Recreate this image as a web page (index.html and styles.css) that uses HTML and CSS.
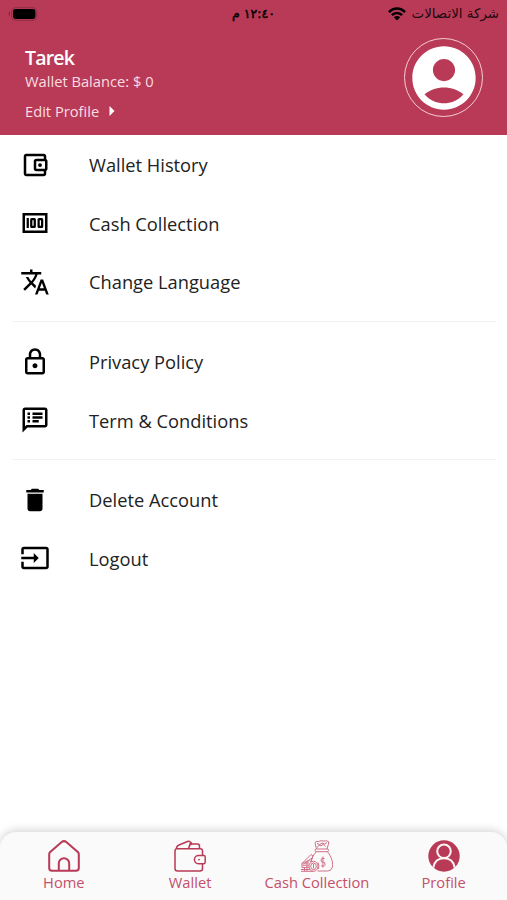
FILE: index.html
```html
<!DOCTYPE html>
<html lang="en">
<head>
<meta charset="utf-8">
<title>Profile</title>
<link rel="stylesheet" href="styles.css">
</head>
<body>
<div class="screen">
  <header class="header">
    <div class="status">
      <svg class="battery" viewBox="0 0 30 14"><rect x="3.6" y=".6" width="25" height="12.8" rx="3.6" fill="none" stroke="#8f3047" stroke-width="1"/><rect x="5" y="2" width="22.4" height="10" rx="2.4"/><path d="M1.8 4.6v4.6C.2 8.600.2 5.200 1.800 4.600z" fill="#7c2a3d"/></svg>
      <span class="clock" dir="rtl">١٢:٤٠ م</span>
      <div class="carrier">
        <svg class="wifi" viewBox="0 0 18 14"><g fill="none" stroke="#000" stroke-width="2.500"><path d="M.9 5.100C5.500.300 12.500.300 17.100 5.100"/><path d="M3.900 8.200C6.800 5.200 11.200 5.200 14.100 8.200"/></g><path d="M9 13.600L5.800 10.300C7.600 8.600 10.400 8.600 12.200 10.300z"/></svg>
        <span dir="rtl">شركة الاتصالات</span>
      </div>
    </div>
    <div class="user">
      <div class="info">
        <h1>Tarek</h1>
        <p class="balance">Wallet Balance: $ 0</p>
        <a class="edit">Edit Profile <svg viewBox="0 0 6 10"><path d="M.5 0L5.500 5L.5 10z" fill="#fff"/></svg></a>
      </div>
      <div class="avatar">
        <svg viewBox="0 0 24 24"><path fill="#fff" fill-rule="evenodd" d="M12 2C6.480 2 2 6.480 2 12s4.480 10 10 10 10-4.480 10-10S17.520 2 12 2zM12 6c1.930 0 3.500 1.570 3.500 3.500S13.930 13 12 13s-3.500-1.570-3.500-3.500S10.070 6 12 6zM12 20c-2.030 0-4.430-.820-6.140-2.880C7.550 15.800 9.680 15 12 15s4.450.800 6.140 2.120C16.430 19.180 14.030 20 12 20z"/></svg>
      </div>
    </div>
  </header>

  <main class="menu">
    <section>
      <a class="row"><svg viewBox="0 0 24 24"><path d="M21 7.280V5c0-1.100-.9-2-2-2H5c-1.110 0-2 .9-2 2v14c0 1.100.890 2 2 2h14c1.100 0 2-.9 2-2v-2.280c.590-.350 1-.980 1-1.720V9c0-.740-.410-1.370-1-1.720zM20 9v6h-7V9h7zM5 19V5h14v2h-6c-1.100 0-2 .9-2 2v6c0 1.100.9 2 2 2h6v2H5z"/><circle cx="16" cy="12" r="1.500"/></svg><span>Wallet History</span></a>
      <a class="row"><svg viewBox="0 0 24 24"><g fill="none" stroke="#000"><rect x="3" y="5" width="18" height="14" stroke-width="2"/><path d="M6.200 8v8" stroke-width="1.800"/><rect x="9" y="8.900" width="2.800" height="6.200" rx=".3" stroke-width="1.800"/><rect x="14.900" y="8.900" width="2.800" height="6.200" rx=".3" stroke-width="1.800"/></g></svg><span>Cash Collection</span></a>
      <a class="row"><svg viewBox="0 0 24 24"><path d="M12.870 15.070l-2.540-2.510.030-.030c1.740-1.940 2.980-4.170 3.710-6.530H17V4h-7V2H8v2H1v1.990h11.170C11.500 7.920 10.440 9.750 9 11.350 8.070 10.320 7.300 9.190 6.690 8h-2c.730 1.630 1.730 3.170 2.980 4.560l-5.090 5.020L4 19l5-5 3.110 3.110.760-2.040zM18.500 10h-2L12 22h2l1.120-3h4.750L21 22h2l-4.500-12zm-2.620 7l1.620-4.330L19.120 17h-3.240z"/></svg><span>Change Language</span></a>
    </section>
    <section>
      <a class="row"><svg viewBox="0 0 24 24"><path d="M18 8h-1V6c0-2.760-2.240-5-5-5S7 3.240 7 6v2H6c-1.100 0-2 .9-2 2v10c0 1.100.9 2 2 2h12c1.100 0 2-.9 2-2V10c0-1.100-.9-2-2-2zM9 6c0-1.660 1.340-3 3-3s3 1.340 3 3v2H9V6zm9 14H6V10h12v10zm-6-3c1.100 0 2-.9 2-2s-.9-2-2-2-2 .9-2 2 .9 2 2 2z"/></svg><span>Privacy Policy</span></a>
      <a class="row"><svg viewBox="0 0 24 24"><path d="M20 2H4c-1.100 0-2 .9-2 2v18l4-4h14c1.100 0 2-.9 2-2V4c0-1.100-.9-2-2-2zm0 14H5.170L4 17.170V4h16v12z"/><path d="M6 12h2v2H6zM6 9h2v2H6zM6 6h2v2H6zM10 12h5v2h-5zM10 9h8v2h-8zM10 6h8v2h-8z"/></svg><span>Term &amp; Conditions</span></a>
    </section>
    <section>
      <a class="row"><svg viewBox="0 0 24 24"><path d="M6 19c0 1.100.9 2 2 2h8c1.100 0 2-.9 2-2V7H6v12zM19 4h-3.500l-1-1h-5l-1 1H5v2h14V4z"/></svg><span>Delete Account</span></a>
      <a class="row"><svg viewBox="0 0 24 24"><path d="M21 3.010H3c-1.100 0-2 .9-2 2V9h2V4.990h18v14.030H3V15H1v4.010c0 1.100.9 1.980 2 1.980h18c1.100 0 2-.880 2-1.980v-14c0-1.110-.9-2-2-2zM11 16l4-4-4-4v3H1v2h10v3z"/></svg><span>Logout</span></a>
    </section>
  </main>

  <nav class="tabs">
    <a class="tab"><svg viewBox="0 0 32 32"><g fill="none" stroke="#b93a57" stroke-width="2" stroke-linejoin="round"><path d="M1.200 14.200Q1.200 13 2.200 12L13.700 2Q16 .2 18.300 2L29.800 12Q30.800 13 30.800 14.200V28Q30.800 30.800 28 30.800H4Q1.200 30.800 1.200 28z"/><path d="M10.800 30.500V23.500a5.200 5.200 0 0 1 10.400 0V30.500"/></g></svg><span>Home</span></a>
    <a class="tab"><svg viewBox="0 0 32 32"><g fill="none" stroke="#b93a57" stroke-width="1.500" stroke-linejoin="round"><path d="M28.500 15.500V11Q28.500 8.800 26.300 8.800H3Q1 8.800 1 11V28.500Q1 31 3.500 31H26Q28.500 31 28.500 28.500V23.800"/><path d="M2.500 8.500Q2.500 6 5 5L13.500 1.500Q16 .6 16.500 2.800L14.500 8.500M14.500 8.500L16 5Q16.500 4 18 4H23.500Q25.500 4 25.500 6.500V8.800M16.500 2L18 4"/><path d="M30 15.500H24.500a4.100 4.100 0 0 0 0 8.200H30Q31.200 23.700 31.200 22V17Q31.200 15.500 30 15.500z"/></g><circle cx="25" cy="19.600" r=".9" fill="#b93a57"/></svg><span>Wallet</span></a>
    <a class="tab"><svg viewBox="0 0 32 32"><g fill="none" stroke="#cf6f86" stroke-width="1"><path d="M15.500 9L14 3Q14.500.5 17.500 1.500Q20 .2 22.500 1Q26 0 28 2L26 9M16.500 7.500Q17 4 20 6Q22 3 24.500 6.500M16 3.500Q19 6 21 3Q24 5.500 26 2.500"/><rect x="14" y="9" width="13.500" height="2.700" rx="1.300"/><path d="M15.500 11.700C12.500 14.500 10.500 18 10.200 22M26.500 11.700C30 16 33 23.500 31 28Q30 31 26.500 31H16.500"/><path d="M1.500 23L10 14.500L12 16L10.500 20M2.500 24L11 18M4.500 21.500Q9 20 10.500 21.500"/><ellipse cx="12.500" cy="26.300" rx="4.500" ry="5"/><ellipse cx="12.500" cy="26.300" rx="2.800" ry="3.300"/><path d="M1 23H8M1.500 25.200H8M1 27.400H8M0 29.500H9M0 31.300H12M1 23V27.500M6 22V31M3.500 27V31M12.500 24V28.500M17 22.500Q18.500 25.500 17.500 29"/><path d="M23.500 18.500Q20 17.500 20 20T22 22T24 24.300T20 25.800M21.900 16.500V27.500"/></g></svg><span>Cash Collection</span></a>
    <a class="tab"><svg viewBox="0 0 32 32"><circle cx="16" cy="16" r="15.700" fill="#b93a57"/><g fill="none" stroke="#fbf4f5" stroke-width="2"><circle cx="16" cy="11.300" r="6.800"/><path d="M5.300 27.500C6.500 21 10.500 18.300 16 18.300S25.500 21 26.700 27.500"/></g></svg><span>Profile</span></a>
  </nav>
</div>
</body>
</html>
```
FILE: styles.css
```css
* { box-sizing: border-box; }
body { margin: 0; background: #fff; font-family: "Open Sans", sans-serif; }
.screen { width: 507px; height: 900px; display: flex; flex-direction: column; overflow: hidden; }

.header { height: 135px; flex: none; background: #b93a57; color: #fff; }
.status { height: 27px; display: grid; grid-template-columns: 1fr auto 1fr; align-items: center; padding: 0 8px; color: #190a0e; font-family: "DejaVu Sans", sans-serif; font-size: 13.400px; }
.battery { width: 30px; height: 14px; display: block; }
.clock { font-size: 12.500px; color: #000; -webkit-text-stroke: .5px #000; }
.carrier { display: flex; justify-content: flex-end; align-items: center; gap: 6px; white-space: nowrap; }
.wifi { width: 18px; height: 14px; }

.user { display: flex; justify-content: space-between; padding: 11px 24px 0 25px; }
.info { padding-top: 7px; }
h1 { margin: 0; font-size: 19.500px; line-height: 25px; font-weight: 600; letter-spacing: -.8px; }
.balance { margin: 0; font-size: 14.700px; line-height: 22px; color: #f9dde2; }
.edit { display: flex; align-items: center; gap: 10px; margin-top: 8px; font-size: 14.700px; line-height: 22px; color: #f9dde2; }
.edit svg { width: 6px; height: 10px; }
.avatar { width: 79px; height: 79px; border: 1.500px solid #f6cdd4; border-radius: 50%; display: grid; place-items: center; }
.avatar svg { width: 76px; height: 76px; }

.menu { flex: 1; padding: 0 11px 0 12px; }
section { padding: 10px 0; border-bottom: 1px solid #f3f3f3; }
section:first-child { padding-top: .5px; }
section:last-child { border-bottom: 0; }
.row { height: 58.600px; display: flex; align-items: center; gap: 39px; padding-left: 8px; font-size: 18.300px; line-height: 24px; color: #222; }
.row span { padding-top: 1px; }
.row svg { width: 30px; height: 30px; }

.tabs { height: 68px; flex: none; display: grid; grid-template-columns: repeat(4, 1fr); padding: 8px 0 0; background: #fafafa; border-radius: 16px 16px 0 0; box-shadow: 0 -2px 9px rgba(0, 0, 0, .17); }
.tab { display: flex; flex-direction: column; align-items: center; font-size: 14.700px; line-height: 20px; color: #c4506b; }
.tab svg { width: 32px; height: 32px; }
.tab:first-child { padding-left: 1px; }
```
